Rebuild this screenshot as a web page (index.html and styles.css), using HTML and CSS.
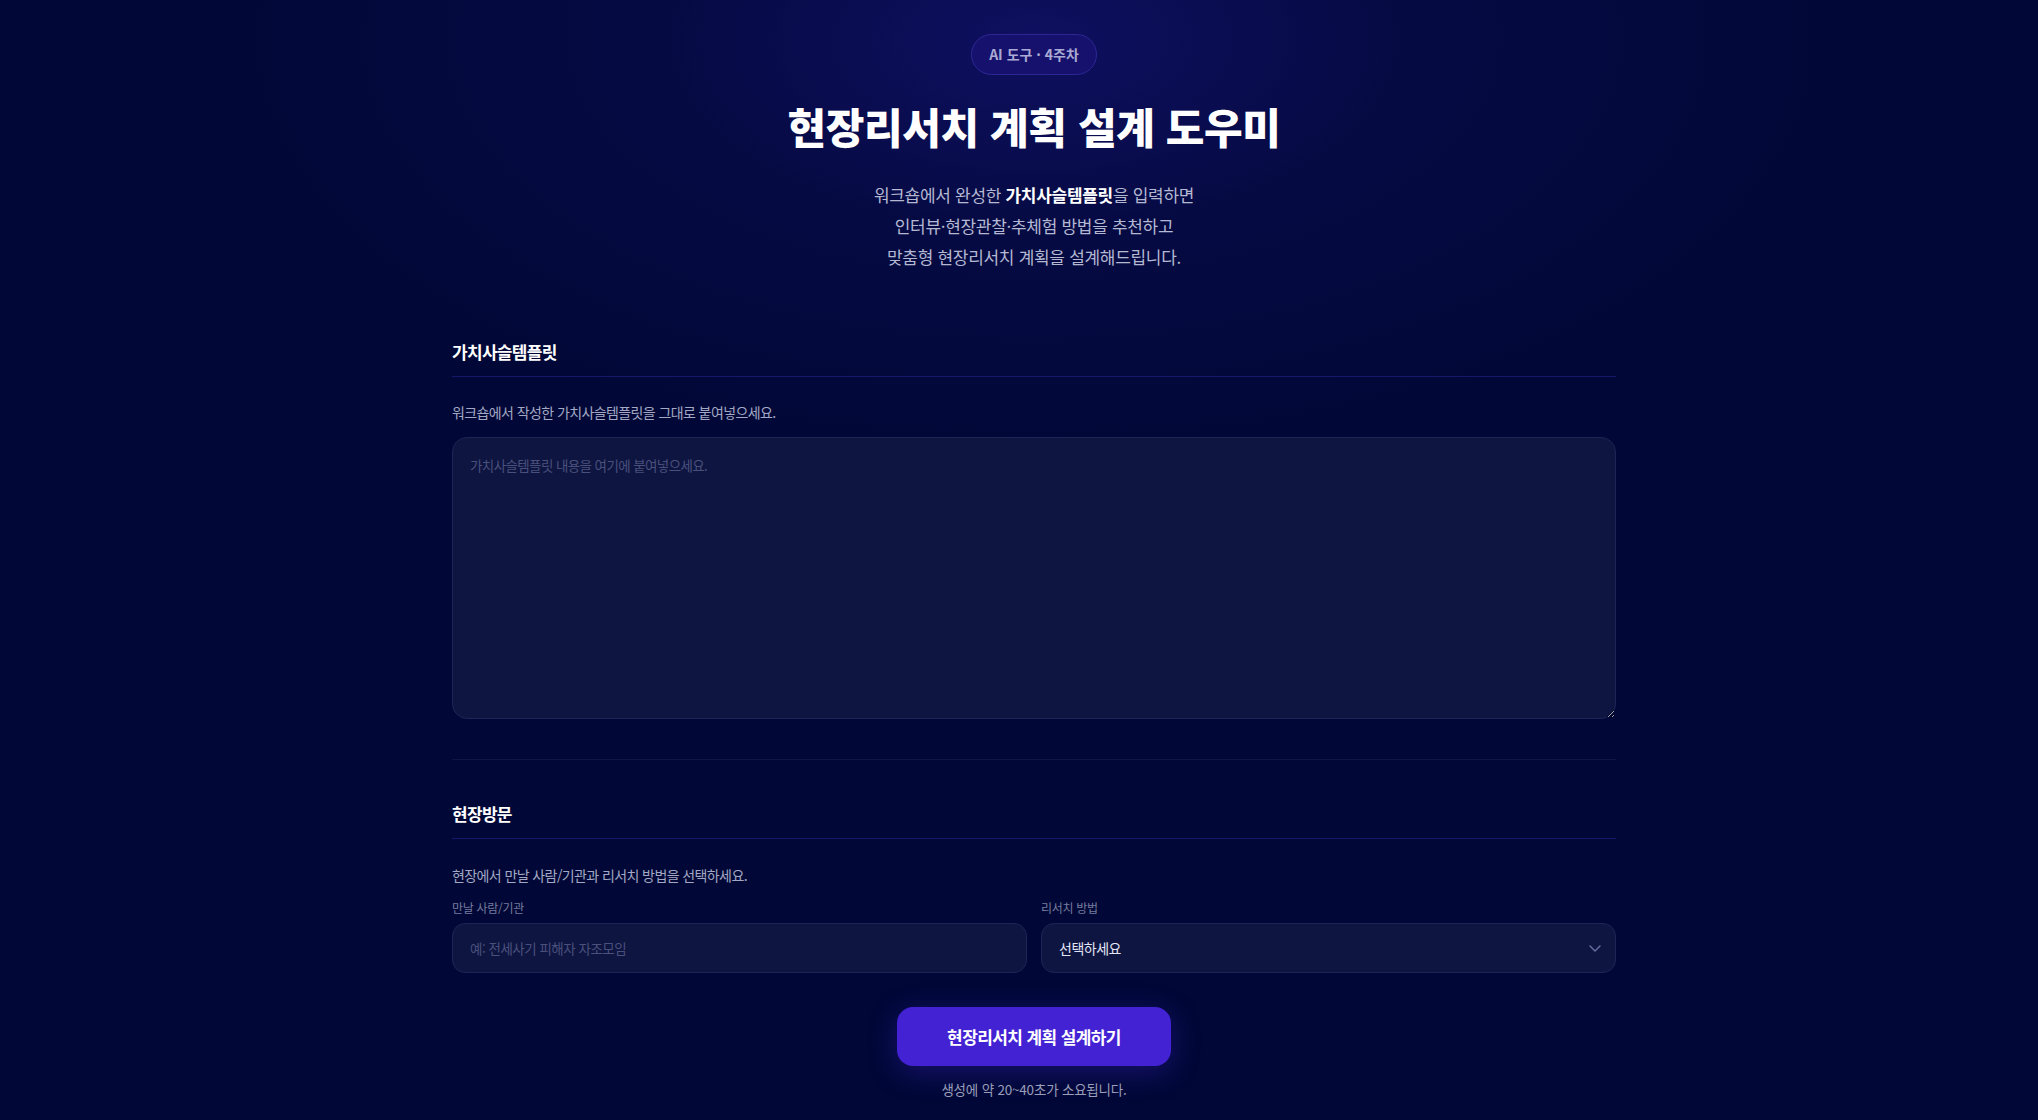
FILE: index.html
```html
<!DOCTYPE html>
<html lang="ko">
<head>
<meta charset="utf-8">
<title>현장리서치 계획 설계 도우미</title>
<link rel="stylesheet" href="styles.css">
</head>
<body>
<main class="page">
  <header class="hero">
    <span class="badge">AI 도구 · 4주차</span>
    <h1 class="title">현장리서치 계획 설계 도우미</h1>
    <p class="subtitle">워크숍에서 완성한 <strong>가치사슬템플릿</strong>을 입력하면<br>인터뷰·현장관찰·추체험 방법을 추천하고<br>맞춤형 현장리서치 계획을 설계해드립니다.</p>
  </header>

  <div class="form">
    <section class="section section-first">
      <h2 class="section-title">가치사슬템플릿</h2>
      <p class="section-desc">워크숍에서 작성한 가치사슬템플릿을 그대로 붙여넣으세요.</p>
      <textarea class="textarea" placeholder="가치사슬템플릿 내용을 여기에 붙여넣으세요."></textarea>
    </section>

    <section class="section section-last">
      <h2 class="section-title">현장방문</h2>
      <p class="section-desc">현장에서 만날 사람/기관과 리서치 방법을 선택하세요.</p>
      <div class="fields">
        <label class="field">
          <span class="field-label">만날 사람/기관</span>
          <input class="input" type="text" placeholder="예: 전세사기 피해자 자조모임">
        </label>
        <label class="field">
          <span class="field-label">리서치 방법</span>
          <span class="select-wrap">
            <select class="select">
              <option>선택하세요</option>
            </select>
            <svg class="chevron" width="12" height="7" viewBox="0 0 12 7" fill="none"><path d="M1 1l5 5 5-5" stroke="#6a70a2" stroke-width="1.4" stroke-linecap="round" stroke-linejoin="round"/></svg>
          </span>
        </label>
      </div>
    </section>

    <div class="actions">
      <button class="submit" type="button">현장리서치 계획 설계하기</button>
      <p class="note">생성에 약 20~40초가 소요됩니다.</p>
    </div>
  </div>
</main>
</body>
</html>
```

FILE: styles.css
```css
* {
  box-sizing: border-box;
}

html, body {
  margin: 0;
  padding: 0;
}

body {
  min-height: 1120px;
  background-color: #010837;
  background-image:
    radial-gradient(ellipse 820px 420px at calc(50% + 15px) 40px, rgba(20, 18, 110, 0.75) 0%, rgba(14, 14, 90, 0.35) 45%, rgba(1, 8, 55, 0) 100%);
  background-repeat: no-repeat;
  font-family: "Noto Sans CJK KR", "Noto Sans", sans-serif;
  color: #ffffff;
}

.page {
  padding-left: 30px;
}

.hero {
  text-align: center;
  padding-top: 34px;
  padding-bottom: 26px;
}

.badge {
  display: inline-block;
  padding: 9px 17px;
  border: 1px solid #2b2896;
  border-radius: 999px;
  background: #16116c;
  color: #aaaad4;
  font-size: 14px;
  font-weight: 700;
  line-height: 21px;
}

.title {
  margin: 22px 0 0;
  font-size: 42px;
  line-height: 58px;
  font-weight: 800;
  letter-spacing: -0.4px;
  color: #ffffff;
}

.subtitle {
  margin: 24px 0 0;
  font-size: 17px;
  line-height: 31px;
  letter-spacing: -0.3px;
  color: #b4b8d2;
}

.subtitle strong {
  color: #ffffff;
  font-weight: 700;
}

.form {
  width: 1164px;
  margin: 0 auto;
}

.section {
  padding-top: 42px;
}

.section-first {
  padding-bottom: 40px;
  border-bottom: 1px solid #0e1547;
}

.section-title {
  margin: 0;
  padding-bottom: 12px;
  border-bottom: 1px solid #16186b;
  font-size: 17px;
  line-height: 24px;
  font-weight: 700;
  letter-spacing: -0.7px;
  color: #ffffff;
}

.section-desc {
  margin: 25px 0 0;
  font-size: 14px;
  line-height: 20px;
  letter-spacing: -0.6px;
  color: #a3a8c4;
}

.section-last .section-desc {
  margin-top: 26px;
}

.textarea {
  display: block;
  width: 100%;
  height: 282px;
  margin-top: 15px;
  padding: 17px 17px;
  border: 1px solid #1e2556;
  border-radius: 15px;
  background: #0e1541;
  color: #e0e4f5;
  font-family: inherit;
  font-size: 13.5px;
  line-height: 20px;
  letter-spacing: -0.6px;
  outline: none;
  resize: vertical;
}

.textarea::placeholder,
.input::placeholder {
  color: #4a507c;
}

.fields {
  display: grid;
  grid-template-columns: 1fr 1fr;
  column-gap: 14px;
  margin-top: 14px;
}

.field {
  display: flex;
  flex-direction: column;
}

.field-label {
  font-size: 12px;
  line-height: 18px;
  letter-spacing: -0.3px;
  color: #767c9e;
  margin-bottom: 6px;
}

.input,
.select {
  display: block;
  width: 100%;
  height: 50px;
  padding: 0 17px;
  border: 1px solid #1e2556;
  border-radius: 13px;
  background: #0e1541;
  color: #e2e5f6;
  font-family: inherit;
  font-size: 13.5px;
  letter-spacing: -0.5px;
  outline: none;
}

.select {
  appearance: none;
  -webkit-appearance: none;
  font-size: 14px;
}

.select-wrap {
  position: relative;
  display: block;
}

.chevron {
  position: absolute;
  right: 15px;
  top: 22px;
  pointer-events: none;
}

.actions {
  display: flex;
  flex-direction: column;
  align-items: center;
  margin-top: 34px;
}

.submit {
  height: 59px;
  padding: 0 50px;
  border: none;
  border-radius: 16px;
  background: #4322d4;
  color: #ffffff;
  font-family: inherit;
  font-size: 17px;
  font-weight: 700;
  letter-spacing: -0.6px;
  box-shadow: 0 6px 28px rgba(67, 34, 212, 0.35);
  cursor: pointer;
}

.note {
  margin: 13px 0 0;
  font-size: 13.5px;
  line-height: 20px;
  letter-spacing: -0.2px;
  color: #9a9eba;
}
```
